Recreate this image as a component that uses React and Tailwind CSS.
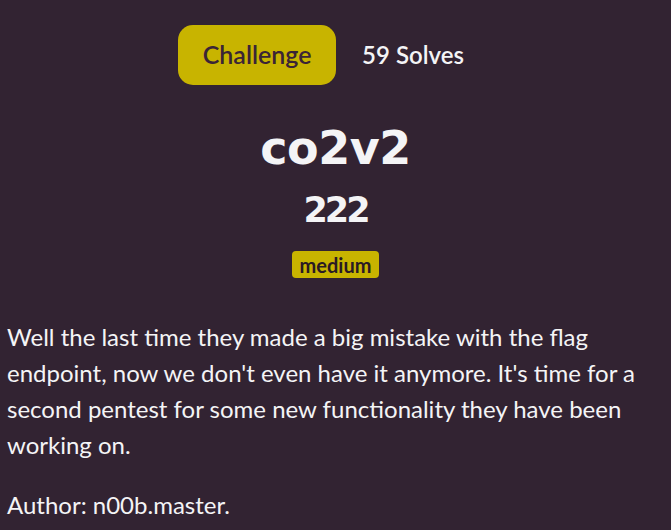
export default function App() {
  return (
    <div className="min-h-[530px] bg-[#322332] text-[#f4f4f6] font-['Lato',sans-serif] px-[7px] overflow-hidden">
      <div className="flex justify-center items-center gap-[26px] pt-[25px] pr-[29px]">
        <div className="bg-[#c8b400] text-[#3a2436] rounded-[15px] w-[158px] h-[60px] flex items-center justify-center text-[25px] font-semibold">
          Challenge
        </div>
        <div className="text-[24px] font-semibold">59 Solves</div>
      </div>
      <h1 className="text-center mt-[35px] text-[46px] leading-[56px] font-bold font-['DejaVu_Sans',sans-serif] tracking-[-0.5px]">
        co2v2
      </h1>
      <div className="text-center mt-[14px] text-[35px] leading-[40px] font-bold font-['DejaVu_Sans',sans-serif] tracking-[-3px]">
        222
      </div>
      <div className="flex justify-center mt-[21px]">
        <span className="bg-[#c8b400] text-[#2a1a24] rounded-[4px] px-[8px] h-[27px] flex items-center text-[20px] font-bold">
          medium
        </span>
      </div>
      <p className="mt-[41px] text-[24px] leading-[36px]">
        Well the last time they made a big mistake with the flag endpoint, now we don't even have it anymore. It's time for a second pentest for some new functionality they have been working on.
      </p>
      <p className="mt-[24px] text-[24px] leading-[36px]">Author: n00b.master.</p>
    </div>
  );
}
